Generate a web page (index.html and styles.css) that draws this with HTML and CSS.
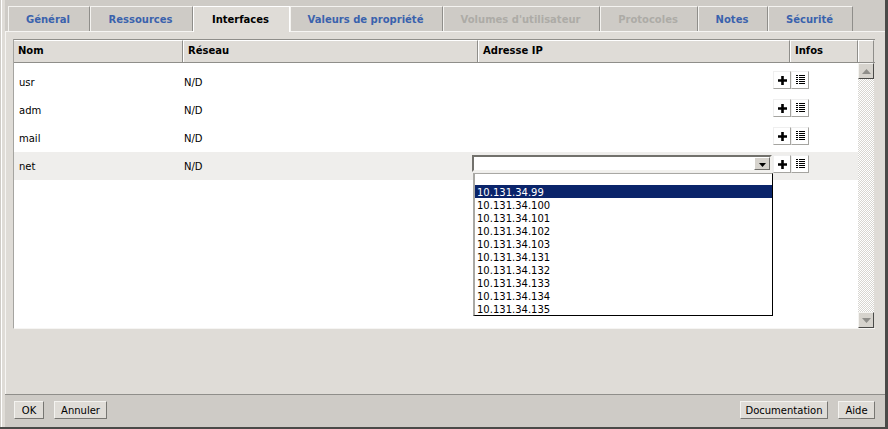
FILE: index.html
```html
<!DOCTYPE html>
<html lang="fr">
<head>
<meta charset="utf-8">
<title>Interfaces</title>
<link rel="stylesheet" href="styles.css">
</head>
<body>
<div class="app">
  <div class="main">
    <nav class="tabs">
      <div class="tab t1">Général</div>
      <div class="tab t2">Ressources</div>
      <div class="tab t3 active">Interfaces</div>
      <div class="tab t4">Valeurs de propriété</div>
      <div class="tab t5 disabled">Volumes d'utilisateur</div>
      <div class="tab t6 disabled">Protocoles</div>
      <div class="tab t7">Notes</div>
      <div class="tab t8">Sécurité</div>
    </nav>
    <section class="panel">
      <div class="table">
        <div class="thead">
          <div class="th c-nom">Nom</div>
          <div class="th c-res">Réseau</div>
          <div class="th c-ip">Adresse IP</div>
          <div class="th c-inf">Infos</div>
          <div class="th c-cor"></div>
        </div>
        <div class="tbody">
          <div class="rows">
            <div class="row">
              <div class="cell">usr</div><div class="cell">N/D</div><div></div>
              <div class="acts">
                <button class="ic"><svg width="9" height="9" viewBox="0 0 9 9"><path d="M3.2 0h2.600v3.200H9v2.600H5.800V9H3.200V5.800H0V3.200h3.200z"/></svg></button>
                <button class="ic"><svg width="9" height="10" viewBox="0 0 9 10" shape-rendering="crispEdges"><path d="M0 0h2v1H0zM3 0h6v1H3zM0 2h2v1H0zM3 2h6v1H3zM0 4h2v1H0zM3 4h6v1H3zM0 6h2v1H0zM3 6h6v1H3zM0 8h2v1H0zM3 8h6v1H3z"/></svg></button>
              </div>
            </div>
            <div class="row">
              <div class="cell">adm</div><div class="cell">N/D</div><div></div>
              <div class="acts">
                <button class="ic"><svg width="9" height="9" viewBox="0 0 9 9"><path d="M3.2 0h2.600v3.200H9v2.600H5.800V9H3.200V5.800H0V3.200h3.200z"/></svg></button>
                <button class="ic"><svg width="9" height="10" viewBox="0 0 9 10" shape-rendering="crispEdges"><path d="M0 0h2v1H0zM3 0h6v1H3zM0 2h2v1H0zM3 2h6v1H3zM0 4h2v1H0zM3 4h6v1H3zM0 6h2v1H0zM3 6h6v1H3zM0 8h2v1H0zM3 8h6v1H3z"/></svg></button>
              </div>
            </div>
            <div class="row">
              <div class="cell">mail</div><div class="cell">N/D</div><div></div>
              <div class="acts">
                <button class="ic"><svg width="9" height="9" viewBox="0 0 9 9"><path d="M3.2 0h2.600v3.200H9v2.600H5.800V9H3.200V5.800H0V3.200h3.200z"/></svg></button>
                <button class="ic"><svg width="9" height="10" viewBox="0 0 9 10" shape-rendering="crispEdges"><path d="M0 0h2v1H0zM3 0h6v1H3zM0 2h2v1H0zM3 2h6v1H3zM0 4h2v1H0zM3 4h6v1H3zM0 6h2v1H0zM3 6h6v1H3zM0 8h2v1H0zM3 8h6v1H3z"/></svg></button>
              </div>
            </div>
            <div class="row hl">
              <div class="cell">net</div><div class="cell">N/D</div>
              <div class="combo">
                <span class="combo-btn"><svg width="7" height="4" viewBox="0 0 7 4"><path d="M0 0h7L3.5 4z"/></svg></span>
                <ul class="drop">
                  <li class="blank"></li>
                  <li class="sel">10.131.34.99</li>
                  <li>10.131.34.100</li>
                  <li>10.131.34.101</li>
                  <li>10.131.34.102</li>
                  <li>10.131.34.103</li>
                  <li>10.131.34.131</li>
                  <li>10.131.34.132</li>
                  <li>10.131.34.133</li>
                  <li>10.131.34.134</li>
                  <li>10.131.34.135</li>
                </ul>
              </div>
              <div class="acts">
                <button class="ic"><svg width="9" height="9" viewBox="0 0 9 9"><path d="M3.2 0h2.600v3.200H9v2.600H5.800V9H3.200V5.800H0V3.200h3.200z"/></svg></button>
                <button class="ic"><svg width="9" height="10" viewBox="0 0 9 10" shape-rendering="crispEdges"><path d="M0 0h2v1H0zM3 0h6v1H3zM0 2h2v1H0zM3 2h6v1H3zM0 4h2v1H0zM3 4h6v1H3zM0 6h2v1H0zM3 6h6v1H3zM0 8h2v1H0zM3 8h6v1H3z"/></svg></button>
              </div>
            </div>
          </div>
          <div class="scroll">
            <span class="sb"><svg width="9" height="5" viewBox="0 0 9 5"><path d="M4.500 0L9 5H0z"/></svg></span>
            <span class="sb"><svg width="9" height="5" viewBox="0 0 9 5"><path d="M0 0h9L4.500 5z"/></svg></span>
          </div>
        </div>
      </div>
    </section>
    <footer class="foot">
      <button class="btn b-ok">OK</button>
      <button class="btn b-an">Annuler</button>
      <span class="grow"></span>
      <button class="btn b-doc">Documentation</button>
      <button class="btn b-aide">Aide</button>
    </footer>
  </div>
</div>
</body>
</html>
```
FILE: styles.css
```css
* { box-sizing: border-box; }
html, body { margin: 0; padding: 0; }
body { width: 888px; height: 429px; overflow: hidden; font: 10px/13px "DejaVu Sans", sans-serif; color: #000; }
.app {
  width: 888px; height: 429px;
  background: linear-gradient(to right, #cfccc7 0 1px, #fff 1px 2px, #dfdcd7 2px);
  padding-left: 5px;
  border-right: 3px solid #4a4a48;
  border-bottom: 2px solid #4a4a48;
}
.main { height: 100%; display: flex; flex-direction: column; }

.tabs { height: 31px; flex: none; background: #cecbc6; padding: 6px 0 0 3px; display: grid; grid-template-columns: 82px 103px 97px 153px 157px 98px 70px 85px; }
.tab {
  height: 25px; display: flex; align-items: center; justify-content: center;
  border-top: 1px solid #f4f3f0; border-left: 1px solid #f4f3f0; border-right: 1px solid #8f8e8a;
  font-weight: bold; color: #3a62ad; padding-right: 2px;
}
.tab.active { height: 26px; margin-bottom: -1px; position: relative; z-index: 1; background: #dfdcd7; color: #000; border-top-color: #fff; border-left-color: #fff; border-right-color: #fff; padding-bottom: 1px; }
.tab.disabled { color: #adaba6; }

.panel { flex: 1; background: #dfdcd7; border-top: 1px solid #f6f5f3; border-left: 1px solid #f6f5f3; padding: 7px 0 0 7px; }
.table { width: 862px; height: 290px; border-top: 1px solid #8f8e8a; border-left: 1px solid #a5a4a0; border-bottom: 1px solid #f6f5f3; display: flex; flex-direction: column; }
.thead { height: 23px; flex: none; display: flex; border-bottom: 1px solid #8f8e8a; }
.th { border-right: 1px solid #8f8e8a; border-top: 1px solid #fff; font-weight: bold; color: #000; padding: 3px 0 0 4px; }
.c-nom { width: 169px; }
.c-res { width: 295px; border-left: 1px solid #fff; }
.c-ip { width: 312px; border-left: 1px solid #fff; }
.c-inf { width: 68px; border-left: 1px solid #fff; }
.c-cor { width: 16px; border-left: 1px solid #fff; }

.tbody { flex: 1; display: flex; min-height: 0; }
.rows { width: 844px; background: #fff; padding-top: 5px; }
.row { height: 28px; display: grid; grid-template-columns: 170px 288px 301px 36px; align-items: center; }
.row.hl { background: #efeeec; }
.cell { padding-left: 5px; }
.cell + .cell { padding-left: 0; }
.acts { display: flex; align-self: start; margin-top: 3px; }
.ic { width: 18px; height: 18px; padding: 0; background: #fff; border: 1px solid; border-color: #efefef #a5a4a0 #a5a4a0 #efefef; display: flex; align-items: center; justify-content: center; }

.combo { position: relative; align-self: start; margin-top: 3px; width: 300px; height: 17px; background: #fff; border: 2px solid; border-color: #72716c #f2f1ee #f2f1ee #72716c; display: flex; justify-content: flex-end; }
.combo-btn { width: 16px; height: 13px; background: #d6d3cd; border: 1px solid; border-color: #fff #6f6e6a #6f6e6a #fff; display: flex; align-items: center; justify-content: center; padding-top: 2px; }
.drop { position: absolute; left: -1px; top: 16px; width: 300px; height: 143px; margin: 0; padding: 0; list-style: none; background: #fff; border-style: solid; border-width: 1px 1px 1px 2px; border-color: #a9a8a4 #000 #000 #a9a8a4; z-index: 2; }
.drop li { height: 13px; padding-left: 2px; line-height: 15px; }
.drop .blank { height: 11px; }
.drop .sel { background: #0a246a; color: #fff; }

.scroll { width: 16px; background: repeating-conic-gradient(#fff 0 25%, #d8d6d1 0 50%) 0 0 / 2px 2px; display: flex; flex-direction: column; justify-content: space-between; }
.sb { width: 16px; height: 16px; background: #d6d3cd; border: 1px solid; border-color: #f4f3f0 #4a4a48 #4a4a48 #f4f3f0; display: flex; align-items: center; justify-content: center; fill: #8f8e8a; }

.foot { height: 33px; flex: none; background: #cecbc6; border-top: 1px solid #8f8e8a; padding: 6px 10px 0 9px; display: flex; align-items: flex-start; }
.grow { flex: 1; }
.btn { height: 18px; padding: 0; background: #dfdcd7; border: 1px solid; border-color: #f4f3f0 #777672 #777672 #f4f3f0; font: inherit; color: #000; }
.b-ok { width: 30px; margin-right: 10px; }
.b-an { width: 53px; }
.b-doc { width: 88px; margin-right: 10px; }
.b-aide { width: 37px; }
```
